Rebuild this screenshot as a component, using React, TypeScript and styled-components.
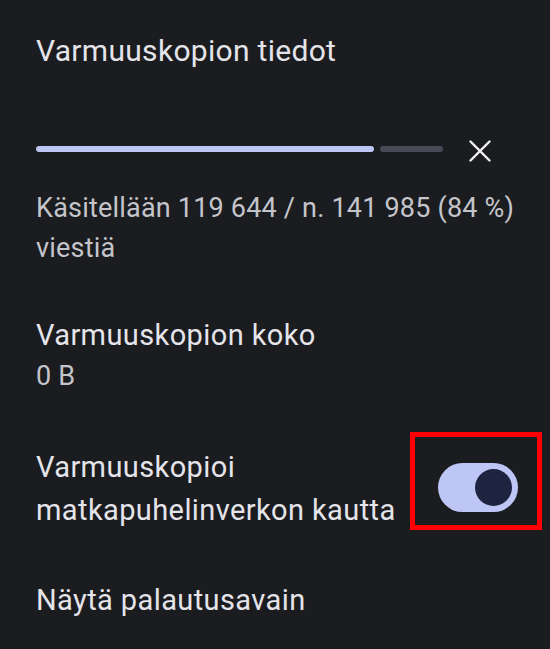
import styled, { createGlobalStyle } from 'styled-components';

const GlobalStyle = createGlobalStyle`
  html, body {
    margin: 0;
    padding: 0;
    background: #1b1c20;
  }
  body {
    font-family: Roboto, 'Noto Sans', sans-serif;
  }
`;

const Screen = styled.main`
  width: 550px;
  height: 649px;
  overflow: hidden;
  background: #1b1c20;
  color: #e3e3e8;
  padding: 33px 8px 0 36px;
  box-sizing: border-box;
`;

const Title = styled.h2`
  margin: 0;
  font-size: 30px;
  font-weight: 400;
  line-height: 36px;
  letter-spacing: 0.3px;
  color: #e4e4ea;
`;

const ProgressRow = styled.div`
  display: flex;
  align-items: center;
  margin-top: 68px;
  height: 24px;
`;

const Bar = styled.div`
  display: flex;
  gap: 6px;
  width: 407px;
`;

const Segment = styled.div<{ $filled?: boolean }>`
  height: 6px;
  border-radius: 3px;
  background: ${(p) => (p.$filled ? '#bdc5f5' : '#474b57')};
`;

const CloseButton = styled.button`
  margin-left: 26px;
  width: 22px;
  height: 22px;
  padding: 0;
  border: none;
  background: none;
  display: flex;
  align-items: center;
  justify-content: center;
  margin-top: 4px;
`;

const Status = styled.p`
  margin: 27px 0 0;
  font-size: 27px;
  line-height: 40px;
  letter-spacing: 0.2px;
  color: #c4c5cb;
`;

const Item = styled.div<{ $top: number }>`
  margin-top: ${(p) => p.$top}px;
`;

const ItemTitle = styled.div`
  font-size: 29px;
  line-height: 40px;
  letter-spacing: 0.4px;
  color: #e4e4ea;
`;

const ItemValue = styled.div`
  font-size: 27px;
  line-height: 42px;
  letter-spacing: 0.2px;
  color: #c4c5cb;
`;

const ToggleRow = styled.div`
  display: flex;
  align-items: flex-start;
  justify-content: space-between;
  margin-top: 35px;
`;

const ToggleLabel = styled.div`
  margin-top: 14px;
  font-size: 29px;
  line-height: 43px;
  letter-spacing: 0.4px;
  color: #e4e4ea;
`;

const Highlight = styled.div`
  width: 132px;
  height: 98px;
  box-sizing: border-box;
  border: 5px solid #ff0000;
  display: flex;
  align-items: flex-start;
  justify-content: center;
  padding: 26px 0 0 3px;
`;

const Track = styled.div<{ $on: boolean }>`
  width: 80px;
  height: 49px;
  border-radius: 25px;
  background: ${(p) => (p.$on ? '#bec6f6' : '#474b57')};
  display: flex;
  align-items: center;
  justify-content: ${(p) => (p.$on ? 'flex-end' : 'flex-start')};
  padding: 0 6px;
  box-sizing: border-box;
`;

const Thumb = styled.div`
  width: 37px;
  height: 37px;
  border-radius: 50%;
  background: #1e2440;
`;

export default function App() {
  const processed = 119644;
  const total = 141985;
  const pct = processed / total;
  return (
    <>
      <GlobalStyle />
      <Screen>
        <Title>Varmuuskopion tiedot</Title>
        <ProgressRow>
          <Bar>
            <Segment $filled style={{ width: `${Math.round(pct * 401)}px` }} />
            <Segment style={{ flex: 1 }} />
          </Bar>
          <CloseButton aria-label="Peruuta">
            <svg width="22" height="22" viewBox="0 0 22 22">
              <path d="M1.5 1.5L20.5 20.5M20.5 1.5L1.5 20.5" stroke="#f1f1f4" strokeWidth="2.4" strokeLinecap="round" />
            </svg>
          </CloseButton>
        </ProgressRow>
        <Status>Käsitellään 119 644 / n. 141 985 (84 %) viestiä</Status>
        <Item $top={47}>
          <ItemTitle>Varmuuskopion koko</ItemTitle>
          <ItemValue>0 B</ItemValue>
        </Item>
        <ToggleRow>
          <ToggleLabel>
            Varmuuskopioi
            <br />
            matkapuhelinverkon kautta
          </ToggleLabel>
          <Highlight>
            <Track $on>
              <Thumb />
            </Track>
          </Highlight>
        </ToggleRow>
        <Item $top={48}>
          <ItemTitle>Näytä palautusavain</ItemTitle>
        </Item>
      </Screen>
    </>
  );
}
